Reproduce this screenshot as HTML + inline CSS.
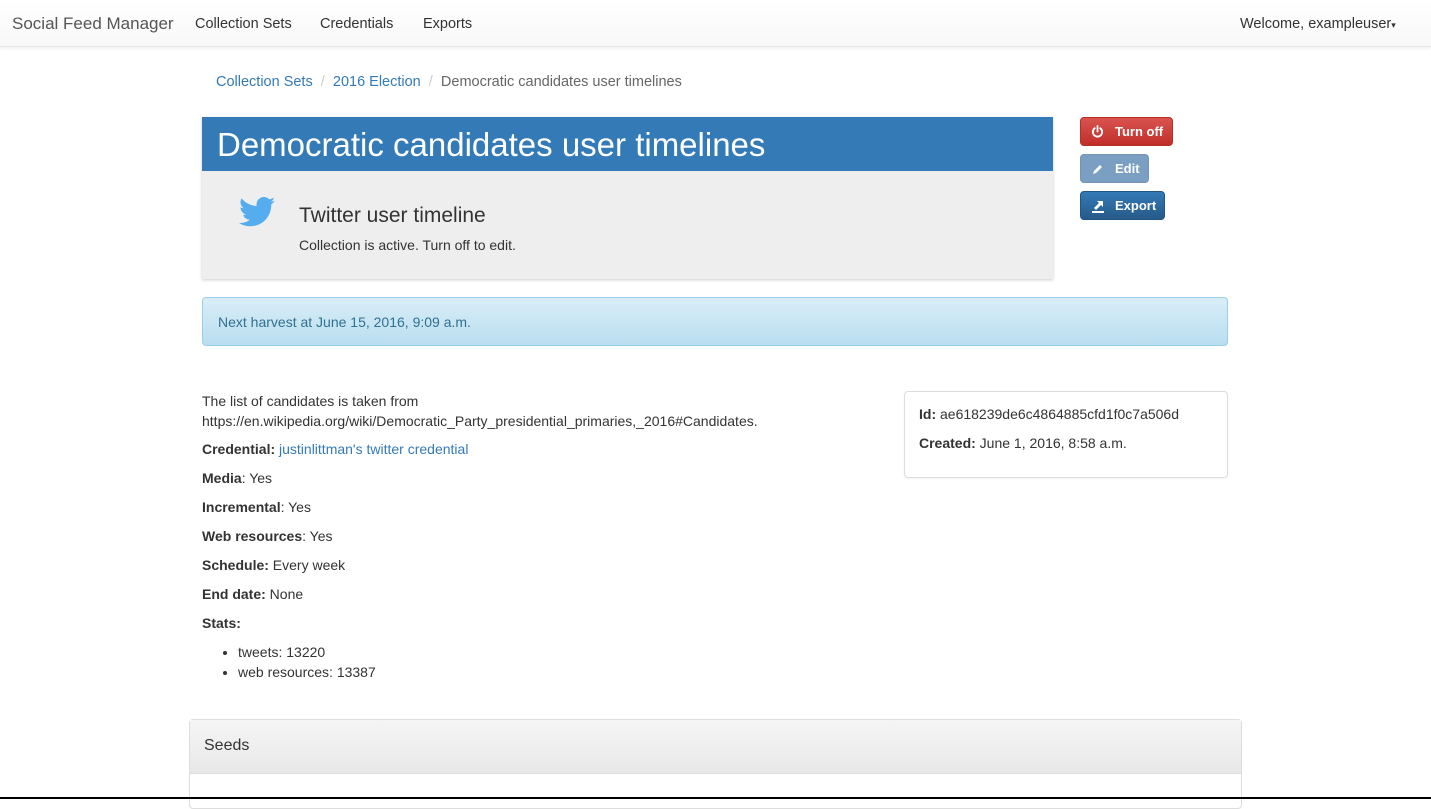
<!DOCTYPE html>
<html><head><style>
*{box-sizing:border-box}
body{margin:0;width:1431px;height:799px;overflow:hidden;font-family:"Liberation Sans",sans-serif;font-size:14px;color:#333;background:#fff;position:relative}
.nav{position:absolute;left:0;top:0;width:1431px;height:47px;background:linear-gradient(#fff,#f8f8f8);border-bottom:1px solid #e5e5e5;box-shadow:0 1px 4px rgba(0,0,0,.08)}
.nav span{position:absolute;top:16px;font-size:14.5px;color:#333}
.a{color:#337ab7}
.abs{position:absolute}
.btn{position:absolute;left:1080px;height:29px;border-radius:4px;color:#fff;font-size:13px;font-weight:bold;line-height:27px;padding-left:34px}
</style></head><body>
<div class="nav">
<span style="left:12px;font-size:17px;top:14px;color:#555">Social Feed Manager</span>
<span style="left:195px">Collection Sets</span>
<span style="left:320px">Credentials</span>
<span style="left:423px">Exports</span>
<span style="left:1240px">Welcome, exampleuser<span style="position:static;font-size:9px">&#9662;</span></span>
</div>
<div class="abs" style="left:216px;top:74px;font-size:14.5px"><span class="a">Collection Sets</span> <span style="color:#ccc">&nbsp;/&nbsp;</span> <span class="a">2016 Election</span> <span style="color:#ccc">&nbsp;/&nbsp;</span> <span style="color:#666">Democratic candidates user timelines</span></div>
<div class="abs" style="left:202px;top:117px;width:851px;height:162px;background:#eee;box-shadow:0 1px 3px rgba(0,0,0,.2)">
<div style="height:54px;background:#337ab7;color:#fff;font-size:33px;padding:9px 0 0 15px">Democratic candidates user timelines</div>
<svg class="abs" style="left:37px;top:80px" width="36" height="30" viewBox="0 0 24 20"><path fill="#55acee" d="M24 2.4a10 10 0 0 1-2.8.8A5 5 0 0 0 23.3.4a10 10 0 0 1-3.1 1.2A4.9 4.9 0 0 0 11.8 6 14 14 0 0 1 1.7.9a4.9 4.9 0 0 0 1.5 6.6A5 5 0 0 1 1 6.9a4.9 4.9 0 0 0 3.900 4.8 5 5 0 0 1-2.2.1 4.9 4.9 0 0 0 4.6 3.4A9.9 9.9 0 0 1 0 17.3 14 14 0 0 0 7.5 19.500c9 0 14-7.5 14-14v-.6A10 10 0 0 0 24 2.4z"/></svg>
<div class="abs" style="left:97px;top:87px;font-size:21px">Twitter user timeline</div>
<div class="abs" style="left:97px;top:120px;font-size:14px">Collection is active. Turn off to edit.</div>
</div>
<div class="btn" style="top:117px;width:93px;background:linear-gradient(#d9534f,#c12e2a);border:1px solid #b92c28">
<svg class="abs" style="left:10px;top:7px" width="13" height="13" viewBox="0 0 14 14"><path d="M4 3.5A5 5 0 1 0 10 3.5M7 1v6" stroke="#fff" stroke-width="2" fill="none" stroke-linecap="round"/></svg>Turn off</div>
<div class="btn" style="top:154px;width:69px;background:#7b9fc2;border:1px solid #7495b8">
<svg class="abs" style="left:11px;top:8px" width="12" height="12" viewBox="0 0 12 12"><path d="M1 11l1-3 6-6 2 2-6 6z" fill="#fff"/></svg>Edit</div>
<div class="btn" style="top:191px;width:85px;background:linear-gradient(#337ab7,#265a88);border:1px solid #245580">
<svg class="abs" style="left:10px;top:7px" width="14" height="14" viewBox="0 0 14 14"><path d="M1 12h12v2H1zM3 9l5-5-2-2h6v6l-2-2-5 5z" fill="#fff"/></svg>Export</div>
<div class="abs" style="left:202px;top:297px;width:1026px;height:49px;background:linear-gradient(#d9edf7,#b9def0);border:1px solid #9acfea;border-radius:4px;color:#31708f;padding:16px 0 0 15px">Next harvest at June 15, 2016, 9:09 a.m.</div>
<div class="abs" style="left:202px;top:391px;line-height:20px">The list of candidates is taken from<br>https://en.wikipedia.org/wiki/Democratic_Party_presidential_primaries,_2016#Candidates.</div>
<div class="abs" style="left:202px;top:435px;line-height:29px">
<b>Credential:</b> <span class="a">justinlittman's twitter credential</span><br>
<b>Media</b>: Yes<br><b>Incremental</b>: Yes<br><b>Web resources</b>: Yes<br><b>Schedule:</b> Every week<br><b>End date:</b> None<br><b>Stats:</b></div>
<ul class="abs" style="left:202px;top:642px;margin:0;padding-left:36px;line-height:20px"><li>tweets: 13220</li><li>web resources: 13387</li></ul>
<div class="abs" style="left:904px;top:391px;width:324px;height:87px;border:1px solid #ddd;border-radius:4px;box-shadow:0 1px 2px rgba(0,0,0,.05);padding:8px 14px;line-height:29px"><b>Id:</b> ae618239de6c4864885cfd1f0c7a506d<br><b>Created:</b> June 1, 2016, 8:58 a.m.</div>
<div class="abs" style="left:189px;top:719px;width:1053px;height:90px;border:1px solid #ddd;border-radius:4px">
<div style="height:54px;background:linear-gradient(#f5f5f5,#e8e8e8);border-bottom:1px solid #ddd;padding:17px 0 0 14px;font-size:16px">Seeds</div></div>
<div class="abs" style="left:0;top:797px;width:1431px;height:2px;background:#000"></div>
</body></html>
